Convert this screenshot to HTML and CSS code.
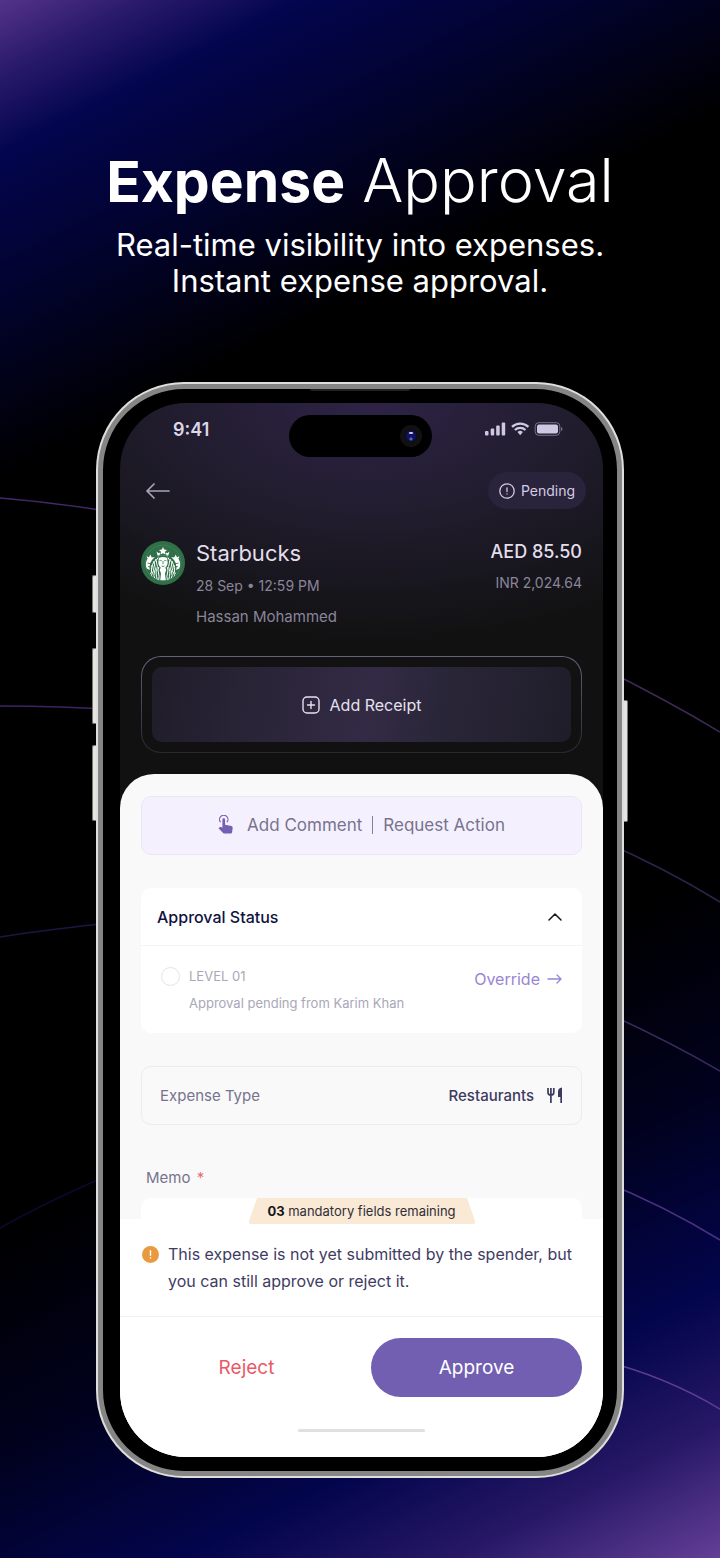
FILE: index.html
```html
<!DOCTYPE html>
<html lang="en">
<head>
<meta charset="utf-8">
<meta name="viewport" content="width=device-width, initial-scale=1">
<title>Expense Approval</title>
<link rel="stylesheet" href="styles.css">
</head>
<body>
<svg class="orbits" viewBox="0 0 720 1558" preserveAspectRatio="none" aria-hidden="true">
  <g fill="none" stroke-width="1.5">
    <path d="M0 498Q50 502 120 513" stroke="#442768"/>
    <path d="M0 706Q60 706 120 710" stroke="#3c2463"/>
    <path d="M0 937Q50 929 120 922" stroke="#1d1644"/>
    <path d="M0 1228Q50 1200 120 1170" stroke="#0b0a2e"/>
    <path d="M600 667Q665 699 720 732" stroke="#3d2a57"/>
    <path d="M600 840Q665 868 720 902" stroke="#30234a"/>
    <path d="M600 1010Q665 1039 720 1071" stroke="#3d2a5e"/>
    <path d="M600 1180Q665 1206 720 1240" stroke="#4a3180"/>
    <path d="M600 1360Q665 1376 720 1409" stroke="#5c3d92"/>
  </g>
</svg>
<main class="promo">
  <header class="intro">
    <h1 class="intro-title"><strong>Expense</strong> Approval</h1>
    <p class="intro-text">Real-time visibility into expenses.<br>Instant expense approval.</p>
  </header>

  <section class="phone" aria-label="Expense details">
    <span class="side-key side-key-action"></span>
    <span class="side-key side-key-up"></span>
    <span class="side-key side-key-down"></span>
    <span class="side-key side-key-power"></span>
    <div class="bezel">
      <span class="speaker"></span>
      <div class="screen">
        <div class="island"><span class="camera"></span></div>
        <div class="status-bar">
          <time>9:41</time>
          <svg width="78" height="14" viewBox="0 0 78 14" aria-hidden="true">
            <g fill="#cfc8e2">
              <rect x="0" y="9" width="3.5" height="4.5" rx="1"/><rect x="5.7" y="6.5" width="3.5" height="7" rx="1"/><rect x="11.2" y="3.5" width="3.5" height="10" rx="1"/><rect x="16.7" y="0.5" width="3.5" height="13" rx="1"/>
              <path d="M32.500 10a4 4 0 0 1 5.400 0l-2.700 3.300z"/>
              <rect x="52" y="2.500" width="21" height="9" rx="2"/>
            </g>
            <g fill="none" stroke="#cfc8e2" stroke-width="2.300"><path d="M27 4.800a12 12 0 0 1 16.400 0"/><path d="M29.900 8a7.800 7.800 0 0 1 10.600 0"/></g>
            <rect x="50.200" y=".7" width="24.600" height="12.600" rx="3.500" fill="none" stroke="#77708b"/>
            <path d="M76 5v4q1.500-.5 1.500-2T76 5" fill="#77708b"/>
          </svg>
        </div>

        <div class="top-row">
          <button class="back" type="button" aria-label="Back">
            <svg width="24" height="16" viewBox="0 0 24 16" fill="none" stroke="#a9a4b6" stroke-width="1.7" stroke-linecap="round" stroke-linejoin="round" aria-hidden="true"><path d="M23 8H1M8 1L1 8l7 7"/></svg>
          </button>
          <span class="pill">
            <svg width="16" height="16" viewBox="0 0 16 16" fill="none" stroke="#d3cce2" stroke-width="1.300" stroke-linecap="round" aria-hidden="true"><circle cx="8" cy="8" r="7.200"/><path d="M8 4.800v3.800M8 10.900v.2"/></svg>
            Pending
          </span>
        </div>

        <div class="merchant">
          <svg class="logo" viewBox="0 0 44 44" role="img" aria-label="Starbucks logo">
            <defs><clipPath id="disc"><circle cx="22" cy="22" r="17.500"/></clipPath></defs>
            <circle cx="22" cy="22" r="22" fill="#2f7049"/>
            <circle cx="22" cy="22" r="17.800" fill="#2f7049" stroke="#53896a" stroke-width=".5"/>
            <g clip-path="url(#disc)" fill="#fff">
              <path d="M22 6l1.200 2.600 2.800.3-2 1.900.6 2.700-2.600-1.300-2.600 1.300.6-2.700-2-1.900 2.800-.3zM15.500 10.500l1.800 1.500 1.800-.3-.5 2.500h6.800l-.5-2.500 1.800.3 1.800-1.500-1.500 5q-5.200-2-10.200 0z"/>
              <path d="M17.800 17q4.200-2 8.400 0l.5 5q-.7 4.500-4.700 6-4-1.500-4.700-6z"/>
              <path d="M5 15l3 1.300 1.300-2.800 1.500 3 3-.5-2.800 3q-3.300 4-2.200 10l-3-1.500q-2.400-4.500.8-10zM39 15l-3 1.300-1.300-2.800-1.500 3-3-.5 2.800 3q3.300 4 2.200 10l3-1.500q2.400-4.500-.8-10z"/>
              <path d="M20 26q2 1.300 4 0l1.300 3-1.300 3.500.8 7h-5.600l.8-7-1.300-3.500z"/>
            </g>
            <g clip-path="url(#disc)" fill="none" stroke="#fff" stroke-width="1">
              <path d="M17 16.500q-2.800 3-1.300 6t0 6 .8 11M15 18q-2.800 4-1.300 7t-.2 6 .8 8M13 20q-2.400 4-.9 7t-.7 5 .5 6M17.800 26q-1.500 3-.3 6t0 8M11 24q-1 3-.5 5t-1 4"/>
              <path d="M27 16.500q2.800 3 1.300 6t0 6-.8 11M29 18q2.800 4 1.300 7t.2 6-.8 8M31 20q2.400 4 .9 7t.7 5-.5 6M26.200 26q1.500 3 .3 6t0 8M33 24q1 3 .5 5t1 4"/>
            </g>
            <g fill="none" stroke="#2f7049" stroke-width=".8"><path d="M18.500 19.800q1.200-.8 2.300 0M23.200 19.800q1.200-.8 2.300 0M22 20v3.200M20.500 25q1.500 1 3 0M16 15.200q6-2.400 12 0M6.500 22l4 1M7 25.500l3 .5M37.500 22l-4 1M37 25.500l-3 .5"/></g>
          </svg>
          <div class="merchant-info">
            <h2>Starbucks</h2>
            <p>28 Sep • 12:59 PM</p>
            <p class="spender">Hassan Mohammed</p>
          </div>
          <div class="amounts">
            <strong>AED 85.50</strong>
            <span>INR 2,024.64</span>
          </div>
        </div>

        <div class="receipt">
          <button class="receipt-button" type="button">
            <svg width="18" height="18" viewBox="0 0 18 18" fill="none" stroke="#e6e1ee" stroke-width="1.400" stroke-linecap="round" aria-hidden="true"><rect x="1" y="1" width="16" height="16" rx="4"/><path d="M9 5.500v7M5.500 9h7"/></svg>
            Add Receipt
          </button>
        </div>

        <div class="sheet">
          <div class="sheet-body">
            <div class="actions">
              <svg width="16" height="19" viewBox="0 0 16 19" aria-hidden="true">
                <path d="M2.600 7.200a4.200 4.200 0 1 1 6.300 0" fill="none" stroke="#7460b2" stroke-width="1.200"/>
                <path d="M4.400 4.700a1.350 1.350 0 0 1 2.700 0v5l6.300 1.200q1.400.4 1.300 1.800l-.6 4.600q-.2 1.200-1.500 1.200H6.500q-.8 0-1.400-.6L.5 13.200l.8-.8q.5-.5 1.300-.3l1.800.5z" fill="#7460b2"/>
              </svg>
              <button type="button">Add Comment</button>
              <span class="actions-rule"></span>
              <button type="button">Request Action</button>
            </div>

            <section class="card">
              <button class="card-head" type="button" aria-expanded="true">
                Approval Status
                <svg width="14" height="8" viewBox="0 0 14 8" fill="none" stroke="#161616" stroke-width="1.500" stroke-linecap="round" stroke-linejoin="round" aria-hidden="true"><path d="M1 7l6-6 6 6"/></svg>
              </button>
              <div class="level">
                <span class="level-dot"></span>
                <div class="level-text">
                  <p>LEVEL 01</p>
                  <p>Approval pending from Karim Khan</p>
                </div>
                <a class="override" href="#override">Override
                  <svg width="15" height="10" viewBox="0 0 15 10" fill="none" stroke="#9886d3" stroke-width="1.300" stroke-linecap="round" stroke-linejoin="round" aria-hidden="true"><path d="M1 5h13M10 1l4 4-4 4"/></svg>
                </a>
              </div>
            </section>

            <button class="type-row" type="button">
              <span>Expense Type</span>
              <span class="type-value">Restaurants
                <svg width="16" height="17" viewBox="0 0 16 17" aria-hidden="true"><path d="M1 1v4.500q0 2.500 2.900 2.700M6.800 1v4.500q0 2.500-2.900 2.700M3.900 1v15" fill="none" stroke="#3d3a60" stroke-width="1.700"/><path d="M15 .5V16h-1.700v-6H11V4.500Q11 1 15 .5z" fill="#3d3a60"/></svg>
              </span>
            </button>

            <label class="memo-label" for="memo">Memo <span>*</span></label>
            <textarea class="memo" id="memo" rows="1"></textarea>
          </div>

          <footer class="footer">
            <div class="remaining">
              <svg viewBox="0 0 228 26" preserveAspectRatio="none" aria-hidden="true"><path d="M9 0H219L227 23q1 3-2 3H3q-3 0-2-3z" fill="#f9e9d5"/></svg>
              <span><b>03</b> mandatory fields remaining</span>
            </div>
            <div class="notice">
              <svg width="17" height="17" viewBox="0 0 17 17" aria-hidden="true"><circle cx="8.500" cy="8.500" r="8.500" fill="#e99a40"/><path d="M8.500 4.800v4.400M8.500 11.600v.4" stroke="#fff" stroke-width="1.400" stroke-linecap="round"/></svg>
              <p>This expense is not yet submitted by the spender, but you can still approve or reject it.</p>
            </div>
            <div class="decision">
              <button class="reject" type="button">Reject</button>
              <button class="approve" type="button">Approve</button>
            </div>
            <span class="home-bar"></span>
          </footer>
        </div>
      </div>
    </div>
  </section>
</main>
</body>
</html>
```
FILE: styles.css
```css
* {
  box-sizing: border-box;
}

body {
  position: relative;
  margin: 0;
  background: linear-gradient(153deg, #54338b 0%, #28196a 4%, #03054e 8%, #020330 15%, #000 25%, #000 64%, #01011c 75%, #03054d 86%, #271866 93%, #643f97 100%);
  color: #fff;
  font-family: Inter, "Noto Sans", sans-serif;
}

h1, h2, p {
  margin: 0;
  font-weight: 400;
}

button {
  padding: 0;
  border: 0;
  background: none;
  color: inherit;
  font: inherit;
  cursor: pointer;
}

svg {
  flex: none;
  display: block;
}

.orbits {
  position: absolute;
  inset: 0;
  width: 100%;
  height: 100%;
}

.promo {
  position: relative;
  display: flex;
  flex-direction: column;
  align-items: center;
  min-height: 100vh;
  padding: 142px 0 80px;
}

.intro {
  text-align: center;
  margin-bottom: 83px;
}

.intro-title {
  font-size: 61px;
  line-height: 76px;
  font-weight: 300;
}

.intro-title strong {
  font-size: 57px;
  font-weight: 700;
}

.intro-text {
  margin-top: 7px;
  font-size: 31px;
  line-height: 36px;
}

.phone {
  position: relative;
  width: calc(100% - 192px);
  max-width: 528px;
  padding: 2px;
  border-radius: 88px;
  background: #dededa;
}

.side-key {
  position: absolute;
  left: -4px;
  width: 4px;
  border: 1px solid #77777a;
  border-right: 0;
  border-radius: 2px 0 0 2px;
  background: #e4e4e0;
}

.side-key-action {
  top: 193px;
  height: 38px;
}

.side-key-up {
  top: 266px;
  height: 76px;
}

.side-key-down {
  top: 363px;
  height: 76px;
}

.side-key-power {
  top: 318px;
  right: -4px;
  left: auto;
  height: 122px;
  border: 1px solid #77777a;
  border-left: 0;
  border-radius: 0 2px 2px 0;
}

.bezel {
  position: relative;
  padding: 14px 14px 14px 17px;
  border: 5px solid #858585;
  border-radius: 86px;
  background: #000;
}

.speaker {
  position: absolute;
  top: 0;
  left: 50%;
  width: 100px;
  height: 2px;
  margin-left: -50px;
  border-radius: 0 0 2px 2px;
  background: #222;
}

.screen {
  position: relative;
  overflow: hidden;
  border-radius: 66px;
  background: radial-gradient(ellipse 90% 240px at 52% 0, #2e2346 0%, #201c2c 50%, #111111 100%) #111111;
}

.island {
  position: absolute;
  top: 12px;
  left: 50%;
  display: flex;
  align-items: center;
  justify-content: flex-end;
  width: 143px;
  height: 42px;
  margin-left: -73px;
  padding-right: 10px;
  border-radius: 21px;
  background: #000;
}

.camera {
  width: 22px;
  height: 22px;
  border-radius: 50%;
  background:
    radial-gradient(ellipse 3px 1px at 50% 8px, #c8c8ff 60%, transparent 100%),
    radial-gradient(circle 2px at 50% 14px, #4b65c8 50%, transparent 100%),
    radial-gradient(circle, #11115c 0 4px, #0c0c20 6px, #111 7px 11px);
}

.status-bar {
  display: flex;
  align-items: center;
  justify-content: space-between;
  height: 52px;
  padding: 0 40px 0 53px;
  color: #dcd6e8;
  font-size: 18px;
  font-weight: 600;
}

.top-row {
  display: flex;
  align-items: center;
  justify-content: space-between;
  margin-top: 17px;
  padding: 0 17px 0 26px;
}

.back {
  padding: 4px 0;
}

.pill {
  display: flex;
  align-items: center;
  gap: 6px;
  height: 37px;
  padding: 0 11px;
  border-radius: 19px;
  background: #2a233c;
  color: #d3cce2;
  font-size: 14px;
}

.merchant {
  display: flex;
  margin-top: 28px;
  padding: 0 21px;
}

.logo {
  width: 44px;
  height: 44px;
  margin-top: 4px;
}

.merchant-info {
  flex: 1;
  margin-left: 11px;
}

.merchant-info h2 {
  color: #e3deec;
  font-size: 22px;
  line-height: 33px;
}

.merchant-info p {
  color: #8a859b;
  font-size: 14px;
  line-height: 31px;
}

.merchant-info .spender {
  font-size: 15px;
}

.amounts {
  display: flex;
  flex-direction: column;
  align-items: flex-end;
}

.amounts strong {
  color: #e3deec;
  font-size: 18px;
  line-height: 30px;
  font-weight: 500;
}

.amounts span {
  color: #8a859b;
  font-size: 14px;
  line-height: 31px;
}

.receipt {
  margin: 24px 21px 21px;
  padding: 10px;
  border: 1px solid transparent;
  border-radius: 20px;
  background:
    linear-gradient(#121213, #111) padding-box,
    linear-gradient(#686179, #2a2731) border-box;
}

.receipt-button {
  display: flex;
  align-items: center;
  justify-content: center;
  gap: 10px;
  width: 100%;
  height: 75px;
  border-radius: 10px;
  background: linear-gradient(100deg, #201d2a, #332b45 52%, #2a2639 68%, #201d2a);
  color: #e6e1ee;
  font-size: 16px;
}

.sheet {
  overflow: hidden;
  border-radius: 34px 34px 0 0;
  background: #f9f9f9;
}

.sheet-body {
  padding: 22px 21px 0;
}

.actions {
  display: flex;
  align-items: center;
  justify-content: center;
  height: 59px;
  padding-bottom: 2px;
  border: 1px solid #ebe5f6;
  border-radius: 10px;
  background: #f5f0fe;
  color: #77738d;
  font-size: 17px;
}

.actions svg {
  margin-right: 13px;
}

.actions-rule {
  width: 1px;
  height: 18px;
  margin: 0 10px;
  background: #85819a;
}

.card {
  margin-top: 33px;
  border-radius: 10px;
  background: #fff;
}

.card-head {
  display: flex;
  align-items: center;
  justify-content: space-between;
  width: 100%;
  height: 58px;
  padding: 0 20px 0 16px;
  border-bottom: 1px solid #f4f3f8;
  color: #11123f;
  font-size: 16px;
  font-weight: 500;
}

.level {
  display: flex;
  padding: 17px 20px 16px;
}

.level-dot {
  width: 19px;
  height: 19px;
  margin-top: 4px;
  border: 1px solid #e4e4e8;
  border-radius: 50%;
}

.level-text {
  flex: 1;
  margin-left: 9px;
  color: #a9a7b8;
  font-size: 13px;
  line-height: 27px;
}

.override {
  display: flex;
  align-items: center;
  gap: 7px;
  height: 32px;
  color: #9886d3;
  font-size: 16px;
  text-decoration: none;
}

.type-row {
  display: flex;
  align-items: center;
  justify-content: space-between;
  width: 100%;
  height: 59px;
  margin-top: 33px;
  padding: 0 18px;
  border: 1px solid #ececee;
  border-radius: 10px;
  color: #77738d;
  font-size: 15px;
}

.type-value {
  display: flex;
  align-items: center;
  gap: 13px;
  color: #3d3a60;
  font-weight: 500;
}

.memo-label {
  display: block;
  margin: 41px 0 8px 5px;
  color: #77738d;
  font-size: 15px;
  line-height: 24px;
}

.memo-label span {
  margin-left: 2px;
  color: #ea6a75;
}

.memo {
  display: block;
  width: 100%;
  height: 21px;
  border: 0;
  border-radius: 10px 10px 0 0;
  background: #fff;
  resize: none;
}

.footer {
  position: relative;
  padding-bottom: 25px;
  background: #fff;
}

.remaining {
  position: absolute;
  top: -21px;
  left: 50%;
  display: grid;
  place-items: center;
  width: 228px;
  height: 26px;
  margin-left: -114px;
  color: #302e35;
  font-size: 13px;
}

.remaining svg {
  width: 228px;
  height: 26px;
}

.remaining svg,
.remaining span {
  grid-area: 1 / 1;
}

.remaining b {
  color: #17161a;
}

.notice {
  display: flex;
  padding: 22px 21px 21px;
  border-bottom: 1px solid #f0f0f0;
  color: #3f3c63;
  font-size: 16px;
  line-height: 27px;
}

.notice svg {
  margin: 5px 9px 0 1px;
}

.decision {
  display: grid;
  grid-template-columns: 1fr 1fr;
  gap: 19px;
  height: 59px;
  margin: 21px 21px 32px;
  font-size: 19px;
}

.reject {
  color: #ea5a66;
}

.approve {
  border-radius: 30px;
  background: #725fb1;
  color: #fff;
}

.home-bar {
  display: block;
  width: 127px;
  height: 3px;
  margin: 0 auto;
  border-radius: 2px;
  background: #e0e0e0;
}
```
